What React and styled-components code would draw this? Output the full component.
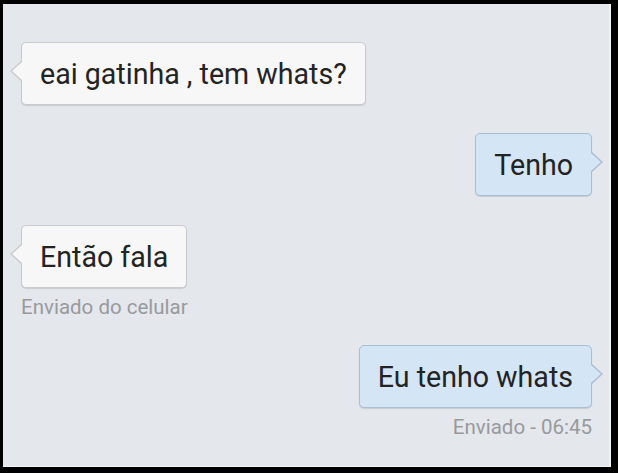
import styled, { createGlobalStyle, css } from "styled-components";

const GlobalStyle = createGlobalStyle`
  html, body {
    margin: 0;
    padding: 0;
    background: #000;
  }
  body {
    font-family: Roboto, "Liberation Sans", sans-serif;
  }
`;

const Screen = styled.div`
  box-sizing: border-box;
  margin: 4px 7px 0 3px;
  height: 463px;
  background: #e4e7ec;
  border-right: 2px solid #f2f3f5;
  border-bottom: 1px solid #f2f3f5;
  padding: 38px 17px 0 18px;
  display: flex;
  flex-direction: column;
`;

const Group = styled.div`
  display: flex;
  flex-direction: column;
  align-items: ${(p) => (p.$out ? "flex-end" : "flex-start")};
  margin-bottom: ${(p) => p.$space}px;
`;

const Bubble = styled.div`
  position: relative;
  box-sizing: border-box;
  height: 63px;
  padding: 0 18px;
  display: flex;
  align-items: center;
  font-size: 28.6px;
  color: #232323;
  border-radius: 5px;
  box-shadow: 0 1px 1px rgba(0, 0, 0, 0.12);
  ${(p) =>
    p.$out
      ? css`
          background: #d4e5f6;
          border: 1px solid #a8bed3;
        `
      : css`
          background: #f7f7f7;
          border: 1px solid #c9cacc;
        `}

  &::before,
  &::after {
    content: "";
    position: absolute;
    top: 18px;
    width: 0;
    height: 0;
    border-top: 10px solid transparent;
    border-bottom: 10px solid transparent;
  }

  ${(p) =>
    p.$out
      ? css`
          &::before {
            right: -12px;
            border-left: 11px solid #a8bed3;
          }
          &::after {
            right: -10px;
            top: 19px;
            border-top-width: 9px;
            border-bottom-width: 9px;
            border-left: 10px solid #d4e5f6;
          }
        `
      : css`
          &::before {
            left: -12px;
            border-right: 11px solid #c9cacc;
          }
          &::after {
            left: -10px;
            top: 19px;
            border-top-width: 9px;
            border-bottom-width: 9px;
            border-right: 10px solid #f7f7f7;
          }
        `}
`;

const Caption = styled.div`
  margin-top: 7px;
  font-size: 20.5px;
  line-height: 24px;
  color: #999a9c;
`;

const messages = [
  { text: "eai gatinha , tem whats?", out: false, space: 28 },
  { text: "Tenho", out: true, space: 29 },
  { text: "Então fala", out: false, caption: "Enviado do celular", space: 26 },
  { text: "Eu tenho whats", out: true, caption: "Enviado - 06:45", space: 0 },
];

export default function App() {
  return (
    <>
      <GlobalStyle />
      <Screen>
        {messages.map((m) => (
          <Group key={m.text} $out={m.out} $space={m.space}>
            <Bubble $out={m.out}>{m.text}</Bubble>
            {m.caption && <Caption $out={m.out}>{m.caption}</Caption>}
          </Group>
        ))}
      </Screen>
    </>
  );
}
